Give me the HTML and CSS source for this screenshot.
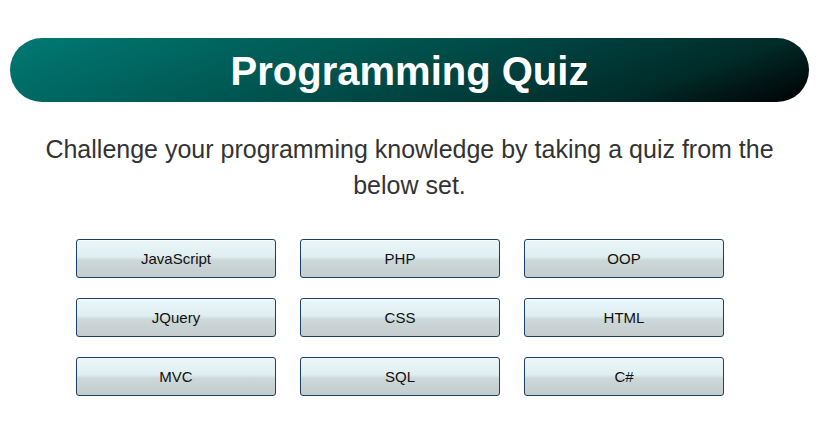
FILE: index.html
```html
<!DOCTYPE html>
<html>
<head>
<meta charset="utf-8">
<link rel="stylesheet" href="styles.css">
</head>
<body>
<div class="page">
  <h1 class="banner">Programming Quiz</h1>
  <p class="intro">Challenge your programming knowledge by taking a quiz from the below set.</p>
  <div class="grid">
    <button class="quiz-btn">JavaScript</button>
    <button class="quiz-btn">PHP</button>
    <button class="quiz-btn">OOP</button>
    <button class="quiz-btn">JQuery</button>
    <button class="quiz-btn">CSS</button>
    <button class="quiz-btn">HTML</button>
    <button class="quiz-btn">MVC</button>
    <button class="quiz-btn">SQL</button>
    <button class="quiz-btn">C#</button>
  </div>
</div>
</body>
</html>
```
FILE: styles.css
```css
html, body {
  margin: 0;
  padding: 0;
  background: #ffffff;
}
body {
  font-family: "Liberation Sans", Arial, sans-serif;
}
.page {
  padding: 38px 9px 0 10px;
}
.banner {
  margin: 0;
  height: 64px;
  border-radius: 32px;
  background: linear-gradient(160deg, #007a73 0%, #00504c 45%, #002b29 80%, #000000 100%);
  color: #ffffff;
  font-size: 40px;
  font-weight: bold;
  line-height: 66px;
  text-align: center;
}
.intro {
  margin: 29px 30px 0 30px;
  color: #333333;
  font-size: 25px;
  line-height: 36px;
  text-align: center;
}
.grid {
  display: grid;
  grid-template-columns: repeat(3, 200px);
  column-gap: 24px;
  row-gap: 20px;
  margin: 36px 0 0 66px;
}
.quiz-btn {
  height: 39px;
  border: 1px solid #1e3f66;
  border-radius: 3px;
  background: linear-gradient(#eaf7f9 0%, #dfeef0 45%, #ccd8d9 55%, #c5cccd 100%);
  box-shadow: inset 0 1px 0 #f6fcfd;
  color: #111111;
  font-family: "Liberation Sans", Arial, sans-serif;
  font-size: 15px;
  padding: 0;
}
```
